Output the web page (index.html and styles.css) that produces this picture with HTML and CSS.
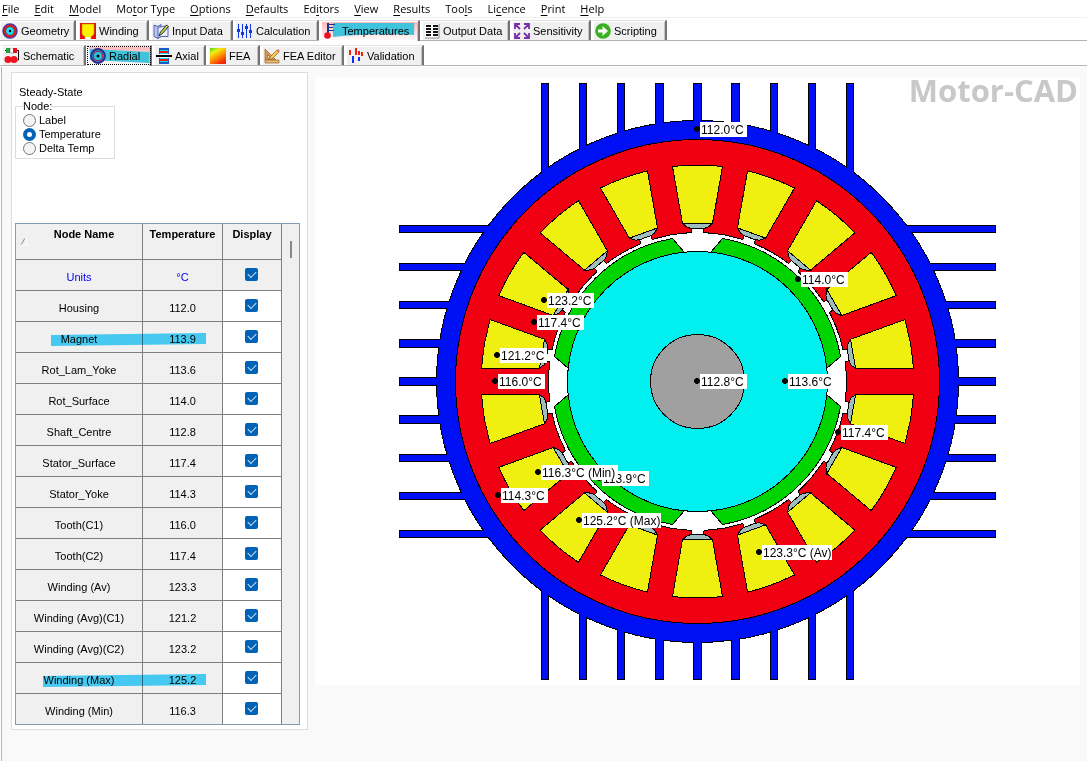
FILE: index.html
```html
<!DOCTYPE html>
<html lang="en">
<head>
<meta charset="utf-8">
<title>Motor-CAD</title>
<link rel="stylesheet" href="styles.css">
</head>
<body>
<nav class="menu" aria-label="Main menu">
<button><u>F</u>ile</button><button><u>E</u>dit</button><button><u>M</u>odel</button><button>Mo<u>t</u>or Type</button><button><u>O</u>ptions</button><button><u>D</u>efaults</button><button>Ed<u>i</u>tors</button><button><u>V</u>iew</button><button><u>R</u>esults</button><button>Too<u>l</u>s</button><button>Li<u>c</u>ence</button><button><u>P</u>rint</button><button><u>H</u>elp</button>
</nav>
<div class="tabs tabs-main" role="tablist">
<button class="tab w76" role="tab"><svg class="ic" viewBox="0 0 16 16"><circle cx="8" cy="8" r="6.800" fill="#18e0f8" stroke="#5030a0" stroke-width="1.800"/><circle cx="8" cy="8" r="5.200" fill="#18e0f8" stroke="#e81818" stroke-width="2"/><circle cx="8" cy="8" r="4.200" fill="none" stroke="#333" stroke-width=".5"/><circle cx="8" cy="8" r="1.200"/></svg>Geometry</button>
<button class="tab w73" role="tab"><svg class="ic" viewBox="0 0 16 16"><path d="M0 0h16v16H0z" fill="#e81010"/><path d="M2 1h12v10l-3 3v2H5v-2l-3-3z" fill="#fff000" stroke="#a89000" stroke-width=".6"/><path d="M5.500 14h5v2h-5z" fill="#fff"/></svg>Winding</button>
<button class="tab w84" role="tab"><svg class="ic" viewBox="0 0 16 16"><path d="M1 2l4 1.500 3-2v12l-3 2-4-2z" fill="#b4c4f4" stroke="#5864b0"/><path d="M5 4v11l3-1.500h7V4l-4-1-3 1z" fill="#e8ecff" stroke="#5864b0"/><path d="M6 13l1.500-4 6-7 2 1.500-6 7z" fill="#b8d048" stroke="#222" stroke-width=".9"/></svg>Input Data</button>
<button class="tab w86" role="tab"><svg class="ic" viewBox="0 0 16 16" fill="#1038e8"><path d="M1 1h1v14H1zM5 1h1v14H5zM9 1h1v14H9zM13 1h1v14h-1z"/><path d="M0 6h3v3H0zM4 9h3v3H4zM8 3h3v3H8zM12 7h3v3h-3z"/></svg>Calculation</button>
<button class="tab active w101" role="tab" aria-selected="true"><svg class="mark" viewBox="0 0 90 14" preserveAspectRatio="none"><path d="M0 0H88V12Q40 10 0 14z"/></svg><svg class="ic" viewBox="0 0 16 16"><path d="M4 0h2v12H4zM6 1h6v1H6zM6 4h4v1H6zM6 7h5v1H6z" fill="#183890"/><circle cx="4.500" cy="12.500" r="3.300" fill="#ee1020"/></svg>Temperatures</button>
<button class="tab w90" role="tab"><svg class="ic" viewBox="0 0 16 16"><path d="M1 1h14v14H1z" fill="#fff"/><path d="M15 1v14H1" fill="none" stroke="#888"/><path d="M2 2h5v2H2zM9 2h5v2H9zM2 5h5v2H2zM9 5h5v2H9zM2 8h5v2H2zM9 8h5v2H9zM2 11h5v2H2zM9 11h5v2H9z" fill="#151515"/></svg>Output Data</button>
<button class="tab w81" role="tab"><svg class="ic" viewBox="0 0 16 16" fill="none" stroke="#7a30a8" stroke-width="1.800"><path d="M1 6V1h5M1 1l5 5M10 1h5v5M15 1l-5 5M1 10v5h5M1 15l5-5M15 10v5h-5M15 15l-5-5"/></svg>Sensitivity</button>
<button class="tab w76" role="tab"><svg class="ic" viewBox="0 0 16 16"><circle cx="8" cy="8" r="7.800" fill="#38b020"/><path d="M3 6.500h4.500V3L13 8l-5.500 5V9.500H3z" fill="#fff"/></svg>Scripting</button>
</div>
<div class="tabs tabs-sub" role="tablist">
<button class="tab w84" role="tab"><svg class="ic" viewBox="0 0 16 16"><path d="M1 2.500h14M14.500 2v10H11" fill="none" stroke="#111"/><path d="M2 0h4v5H2z" fill="#20a040"/><path d="M6 0h4v5H6z" fill="#fff" stroke="#444" stroke-width=".4"/><path d="M9 0h4v5H9z" fill="#e81020"/><circle cx="4" cy="11.500" r="3.500" fill="#f01020"/><circle cx="10" cy="11.500" r="3.500" fill="#f01020"/></svg>Schematic</button>
<button class="tab active focus w66" role="tab" aria-selected="true"><svg class="mark" viewBox="0 0 60 14" preserveAspectRatio="none"><path d="M0 0L60 3V14L0 11z"/></svg><svg class="ic" viewBox="0 0 16 16"><circle cx="8" cy="8" r="6.800" fill="#20c0dc" stroke="#2c2c90" stroke-width="2.200"/><circle cx="8" cy="8" r="4.600" fill="#20c8e4" stroke="#a02850" stroke-width="1.300"/><circle cx="8" cy="8" r="1.500"/></svg>Radial</button>
<button class="tab w54" role="tab"><svg class="ic" viewBox="0 0 16 16"><path d="M3 0h10v16H3z" fill="#2058c8"/><path d="M4 2h8v12H4z" fill="#18dce8"/><path d="M4 3h8v2H4zM4 11h8v2H4z" fill="#e81818"/><path d="M3 6h10v4H3z" fill="#fff"/><path d="M0 7h16v2H0z"/></svg>Axial</button>
<button class="tab w54" role="tab"><svg class="ic" viewBox="0 0 16 16"><defs><linearGradient id="heat" x1="0" y1="0" x2=".6" y2="1"><stop offset="0" stop-color="#50d020"/><stop offset=".3" stop-color="#f0f010"/><stop offset=".6" stop-color="#ff9800"/><stop offset="1" stop-color="#f02808"/></linearGradient></defs><path d="M0 0h16v16H0z" fill="url(#heat)"/></svg>FEA</button>
<button class="tab w84" role="tab"><svg class="ic" viewBox="0 0 16 16"><path fill-rule="evenodd" d="M1 1v11h11zM3.500 6.500v3.500H7z" fill="#d89850" stroke="#986028" stroke-width=".7"/><path d="M1 12h14v3H1z" fill="#e8b878" stroke="#986028" stroke-width=".7"/><path d="M6 9l7-7 2 2-7 7-2.500.500z" fill="#f0d040" stroke="#905030" stroke-width=".7"/><path d="M12.500 2.500l2 2L16 3l-2-2z" fill="#e07070"/></svg>FEA Editor</button>
<button class="tab w80" role="tab"><svg class="ic" viewBox="0 0 16 16"><path d="M1 2h2v5H1zM7 0h2v7H7zM13 4h2v4h-2zM10 3h2v4h-2z" fill="#f02010"/><path d="M4 8h2v7H4zM10 9h2v4h-2z" fill="#1030f0"/></svg>Validation</button>
</div>
<main class="work">
<section class="side">
<p class="state">Steady-State</p>
<fieldset class="node"><legend>Node:</legend>
<label><input type="radio" name="node">Label</label>
<label><input type="radio" name="node" checked>Temperature</label>
<label><input type="radio" name="node">Delta Temp</label>
</fieldset>
<div class="grid">
<table>
<colgroup><col class="c-name"><col class="c-temp"><col class="c-show"></colgroup>
<thead><tr><th><svg class="sort" viewBox="0 0 9 9"><path d="M1 8l4-7" stroke="#888"/><path d="M5 1l3 7H1" stroke="#fff"/></svg>Node Name</th><th>Temperature</th><th>Display</th></tr></thead>
<tbody>
<tr class="units"><td>Units</td><td>°C</td><td><input type="checkbox" aria-label="Display all" checked></td></tr>
<tr><td>Housing</td><td>112.0</td><td><input type="checkbox" aria-label="Housing" checked></td></tr>
<tr><td><svg class="hl hl-a" viewBox="0 0 155 13" preserveAspectRatio="none"><path d="M0 2L155 0V11L0 13z"/></svg>Magnet</td><td>113.9</td><td><input type="checkbox" aria-label="Magnet" checked></td></tr>
<tr><td>Rot_Lam_Yoke</td><td>113.6</td><td><input type="checkbox" aria-label="Rot_Lam_Yoke" checked></td></tr>
<tr><td>Rot_Surface</td><td>114.0</td><td><input type="checkbox" aria-label="Rot_Surface" checked></td></tr>
<tr><td>Shaft_Centre</td><td>112.8</td><td><input type="checkbox" aria-label="Shaft_Centre" checked></td></tr>
<tr><td>Stator_Surface</td><td>117.4</td><td><input type="checkbox" aria-label="Stator_Surface" checked></td></tr>
<tr><td>Stator_Yoke</td><td>114.3</td><td><input type="checkbox" aria-label="Stator_Yoke" checked></td></tr>
<tr><td>Tooth(C1)</td><td>116.0</td><td><input type="checkbox" aria-label="Tooth(C1)" checked></td></tr>
<tr><td>Tooth(C2)</td><td>117.4</td><td><input type="checkbox" aria-label="Tooth(C2)" checked></td></tr>
<tr><td>Winding (Av)</td><td>123.3</td><td><input type="checkbox" aria-label="Winding (Av)" checked></td></tr>
<tr><td>Winding (Avg)(C1)</td><td>121.2</td><td><input type="checkbox" aria-label="Winding (Avg)(C1)" checked></td></tr>
<tr><td>Winding (Avg)(C2)</td><td>123.2</td><td><input type="checkbox" aria-label="Winding (Avg)(C2)" checked></td></tr>
<tr><td><svg class="hl hl-b" viewBox="0 0 155 13" preserveAspectRatio="none"><path d="M0 2L155 0V11L0 13z"/></svg>Winding (Max)</td><td>125.2</td><td><input type="checkbox" aria-label="Winding (Max)" checked></td></tr>
<tr><td>Winding (Min)</td><td>116.3</td><td><input type="checkbox" aria-label="Winding (Min)" checked></td></tr>
</tbody>
</table>
<div class="scroll"><span class="thumb"></span></div>
</div>
</section>
<svg class="canvas" viewBox="315 77 765 608" role="img" aria-label="Radial cross-section with node temperatures">
<defs>
<g id="slot">
<path d="M-6-147V-154H6V-147z" fill="#fff" stroke="none"/>
<path d="M-6-149V-153M6-149V-153" fill="none"/>
<path d="M-15-158L-10-154L-6-153H6L10-154L15-158z" fill="#a0bcbc"/>
<path d="M-15-158H15L25-215A216 216 0 0 0-25-215z" fill="#f0f010"/>
</g>
<path id="magnet" d="M13-129L25-143A145 145 0 0 1 143-25L129-13A129 129 0 0 0 13-129z" fill="#00d400"/>
<path id="fins" d="M-156-298h7v596h-7zM-118-298h7v596h-7zM-80-298h7v596h-7zM-42-298h8v596h-8zM-4-298h8v596h-8zM34-298h8v596h-8zM73-298h7v596h-7zM111-298h7v596h-7zM149-298h7v596h-7zM-298-156v7h596v-7zM-298-118v7h596v-7zM-298-80v7h596v-7zM-298-42v8h596v-8zM-298-4v8h596v-8zM-298 34v8h596v-8zM-298 73v7h596v-7zM-298 111v7h596v-7zM-298 149v7h596v-7z"/>
<path id="dot" d="M-1-3h2l2 2v2l-2 2h-2l-2-2v-2z"/>
</defs>
<rect x="315" y="77" width="765" height="608" fill="#fff"/>
<text class="brand" x="1078" y="102" text-anchor="end">Motor-CAD</text>
<g class="machine" transform="translate(697.5 381.5)">
<use href="#fins" fill="#0010f4"/>
<circle r="261" fill="#0010f4"/>
<g stroke="none" fill="#0010f4">
<circle r="260"/>
<path d="M-155-297h6v594h-6zM-117-297h6v594h-6zM-79-297h6v594h-6zM-41-297h7v594h-7zM-3-297h7v594h-7zM35-297h7v594h-7zM74-297h6v594h-6zM112-297h6v594h-6zM150-297h6v594h-6zM-297-155v6h594v-6zM-297-117v6h594v-6zM-297-79v6h594v-6zM-297-41v7h594v-7zM-297-3v7h594v-7zM-297 35v7h594v-7zM-297 74v6h594v-6zM-297 112v6h594v-6zM-297 150v6h594v-6z" transform="translate(-.5 -.5)"/>
</g>
<circle r="242" fill="#f00010"/>
<circle r="149" fill="#fff"/>
<use href="#slot"/><use href="#slot" transform="rotate(20)"/><use href="#slot" transform="rotate(40)"/><use href="#slot" transform="rotate(60)"/><use href="#slot" transform="rotate(80)"/><use href="#slot" transform="rotate(100)"/><use href="#slot" transform="rotate(120)"/><use href="#slot" transform="rotate(140)"/><use href="#slot" transform="rotate(160)"/><use href="#slot" transform="rotate(180)"/><use href="#slot" transform="rotate(200)"/><use href="#slot" transform="rotate(220)"/><use href="#slot" transform="rotate(240)"/><use href="#slot" transform="rotate(260)"/><use href="#slot" transform="rotate(280)"/><use href="#slot" transform="rotate(300)"/><use href="#slot" transform="rotate(320)"/><use href="#slot" transform="rotate(340)"/>
<use href="#magnet"/><use href="#magnet" transform="rotate(90)"/><use href="#magnet" transform="rotate(180)"/><use href="#magnet" transform="rotate(270)"/>
<circle r="130" fill="#00f0f0"/>
<circle r="47" fill="#a0a0a0"/>
</g>
<g class="labels">
<g transform="translate(697 129)"><use href="#dot"/><rect x="3" y="-7" width="47" height="15"/><text x="4" y="5">112.0°C</text></g>
<g transform="translate(798 279)"><use href="#dot"/><rect x="3" y="-7" width="47" height="15"/><text x="4" y="5">114.0°C</text></g>
<g transform="translate(544 300)"><use href="#dot"/><rect x="3" y="-7" width="47" height="15"/><text x="4" y="5">123.2°C</text></g>
<g transform="translate(534 322)"><use href="#dot"/><rect x="3" y="-7" width="47" height="15"/><text x="4" y="5">117.4°C</text></g>
<g transform="translate(497 355)"><use href="#dot"/><rect x="3" y="-7" width="47" height="15"/><text x="4" y="5">121.2°C</text></g>
<g transform="translate(495 381)"><use href="#dot"/><rect x="3" y="-7" width="47" height="15"/><text x="4" y="5">116.0°C</text></g>
<g transform="translate(697 381)"><use href="#dot"/><rect x="3" y="-7" width="47" height="15"/><text x="4" y="5">112.8°C</text></g>
<g transform="translate(785 381)"><use href="#dot"/><rect x="3" y="-7" width="47" height="15"/><text x="4" y="5">113.6°C</text></g>
<g transform="translate(838 432)"><use href="#dot"/><rect x="3" y="-7" width="47" height="15"/><text x="4" y="5">117.4°C</text></g>
<g transform="translate(599 478)"><use href="#dot"/><rect x="3" y="-7" width="47" height="15"/><text x="4" y="5">113.9°C</text></g>
<g transform="translate(538 472)"><use href="#dot"/><rect x="3" y="-7" width="77" height="15"/><text x="4" y="5">116.3°C (Min)</text></g>
<g transform="translate(498 495)"><use href="#dot"/><rect x="3" y="-7" width="47" height="15"/><text x="4" y="5">114.3°C</text></g>
<g transform="translate(579 520)"><use href="#dot"/><rect x="3" y="-7" width="79" height="15"/><text x="4" y="5">125.2°C (Max)</text></g>
<g transform="translate(759 552)"><use href="#dot"/><rect x="3" y="-7" width="70" height="15"/><text x="4" y="5">123.3°C (Av)</text></g>
</g>
</svg>
</main>
</body>
</html>
```

FILE: styles.css
```css
* { box-sizing: border-box; }
body {
  margin: 0;
  min-height: 100vh;
  display: flex;
  flex-direction: column;
  background: #fff;
  color: #000;
  font: 11px/14px "Liberation Sans", Arial, sans-serif;
}
button { border: 0; padding: 0; background: none; color: inherit; font: inherit; }
.menu {
  display: flex;
  gap: 15px;
  height: 18px;
  padding-left: 2px;
  border-bottom: 1px solid #f0f0f0;
  font: 11px/16px "Open Sans", "Noto Sans", sans-serif;
}
.menu u { text-underline-offset: 2px; }
.tabs { display: flex; align-items: flex-end; border-bottom: 1px solid #b4b4b4; }
.tabs-main { height: 23px; }
.tabs-sub { height: 25px; padding-left: 2px; }
.tab {
  position: relative;
  display: flex;
  align-items: center;
  gap: 3px;
  height: 20px;
  padding-left: 2px;
  background: #f0f0f0;
  border-top: 1px solid #e2e2e2;
  border-right: 2px solid #747474;
  box-shadow: inset 1px 1px #fff, inset -1px 0 #c4c4c4;
  white-space: nowrap;
}
.tab + .tab { border-left: 2px solid #fff; }
.tab.active {
  height: 21px;
  margin-bottom: -1px;
  background: linear-gradient(#ffb4b4, #fff);
}
.focus { outline: 1px dotted #000; outline-offset: -2px; }
.ic { flex: none; width: 16px; height: 16px; position: relative; }
.mark { position: absolute; left: 12px; top: 2px; width: calc(100% - 14px); height: 14px; fill: #40c4dc; z-index: 0; }
.focus .mark { left: 2px; top: 3px; width: calc(100% - 3px); height: 14px; }
.tab.active { isolation: isolate; }
.tab.active .mark { z-index: -1; }
.w54 { width: 54px; }
.w66 { width: 66px; }
.w73 { width: 73px; }
.w76 { width: 76px; }
.w80 { width: 80px; }
.w81 { width: 81px; }
.w84 { width: 84px; }
.w86 { width: 86px; }
.w90 { width: 90px; }
.w101 { width: 101px; }

.work {
  flex: 1;
  display: flex;
  align-items: flex-start;
  gap: 7px;
  margin: 1px 0 0 1px;
  padding: 5px 7px 0 9px;
  background: #f9f9f9;
  border-left: 1px solid #b4b4b4;
}
.side { flex: 0 0 297px; padding: 12px 7px 4px 3px; background: #fff; border: 1px solid #dcdcdc; }
.state { margin: 0 0 0 4px; }
.node { width: 100px; margin: 0 0 64px; padding: 0 7px 3px; border: 1px solid #dcdcdc; }
.node legend { padding: 0; line-height: 14px; }
.node label { display: flex; align-items: center; gap: 3px; height: 14px; }
input { appearance: none; width: 13px; height: 13px; margin: 0; }
.node input { border: 1px solid #777; border-radius: 50%; background: #f4f4f4; }
.node input:checked { border: 4px solid #0063b8; background: #fff; }
.grid { display: flex; border: 1px solid #7f9db9; background: #f0f0f0; }
table { flex: 1; border-collapse: separate; border-spacing: 0; table-layout: fixed; width: 266px; }
.c-name { width: 127px; }
.c-temp { width: 80px; }
.c-show { width: 59px; }
th, td {
  position: relative;
  height: 31px;
  padding: 3px 0 0;
  border-right: 1px solid #808080;
  border-bottom: 1px solid #808080;
  background: #f0f0f0;
  text-align: center;
}
th { height: 36px; padding: 3px 0 0 10px; vertical-align: top; }
th + th { padding-left: 0; }
tr > :last-child { background: #fff; }
th:last-child, .units > :last-child { background: #f0f0f0; }
tbody tr:last-child td { border-bottom: 0; height: 30px; }
.units { color: #00f; }
td:last-child { padding: 0 2px 2px 0; }
td input { display: block; margin: 0 auto; position: relative; border-radius: 2px; background: #0063b8; }
td input::before {
  content: "";
  position: absolute;
  left: 3px;
  top: 3px;
  width: 7px;
  height: 4px;
  border: solid #cfe4f6;
  border-width: 0 0 1px 1px;
  transform: rotate(-45deg);
}
.sort { position: absolute; left: 4px; top: 13px; width: 9px; height: 9px; fill: none; }
.hl { position: absolute; z-index: 1; top: 11px; width: 155px; height: 13px; fill: #4ad5ff; mix-blend-mode: multiply; }
.hl-a { left: 35px; }
.hl-b { left: 27px; width: 163px; }
.scroll { flex: 0 0 17px; padding: 17px 0 0 8px; }
.thumb { display: block; width: 2px; height: 17px; background: #888; }

.canvas { flex: 1; min-width: 0; height: auto; margin-top: 5px; }
.machine { stroke: #000; stroke-width: 1px; shape-rendering: crispEdges; }
.brand { font: bold 31px "Open Sans", "Noto Sans", sans-serif; fill: #c8c8c8; }
.labels text { font: 12px "Liberation Sans", Arial, sans-serif; }
.labels rect { fill: #fff; }
```
